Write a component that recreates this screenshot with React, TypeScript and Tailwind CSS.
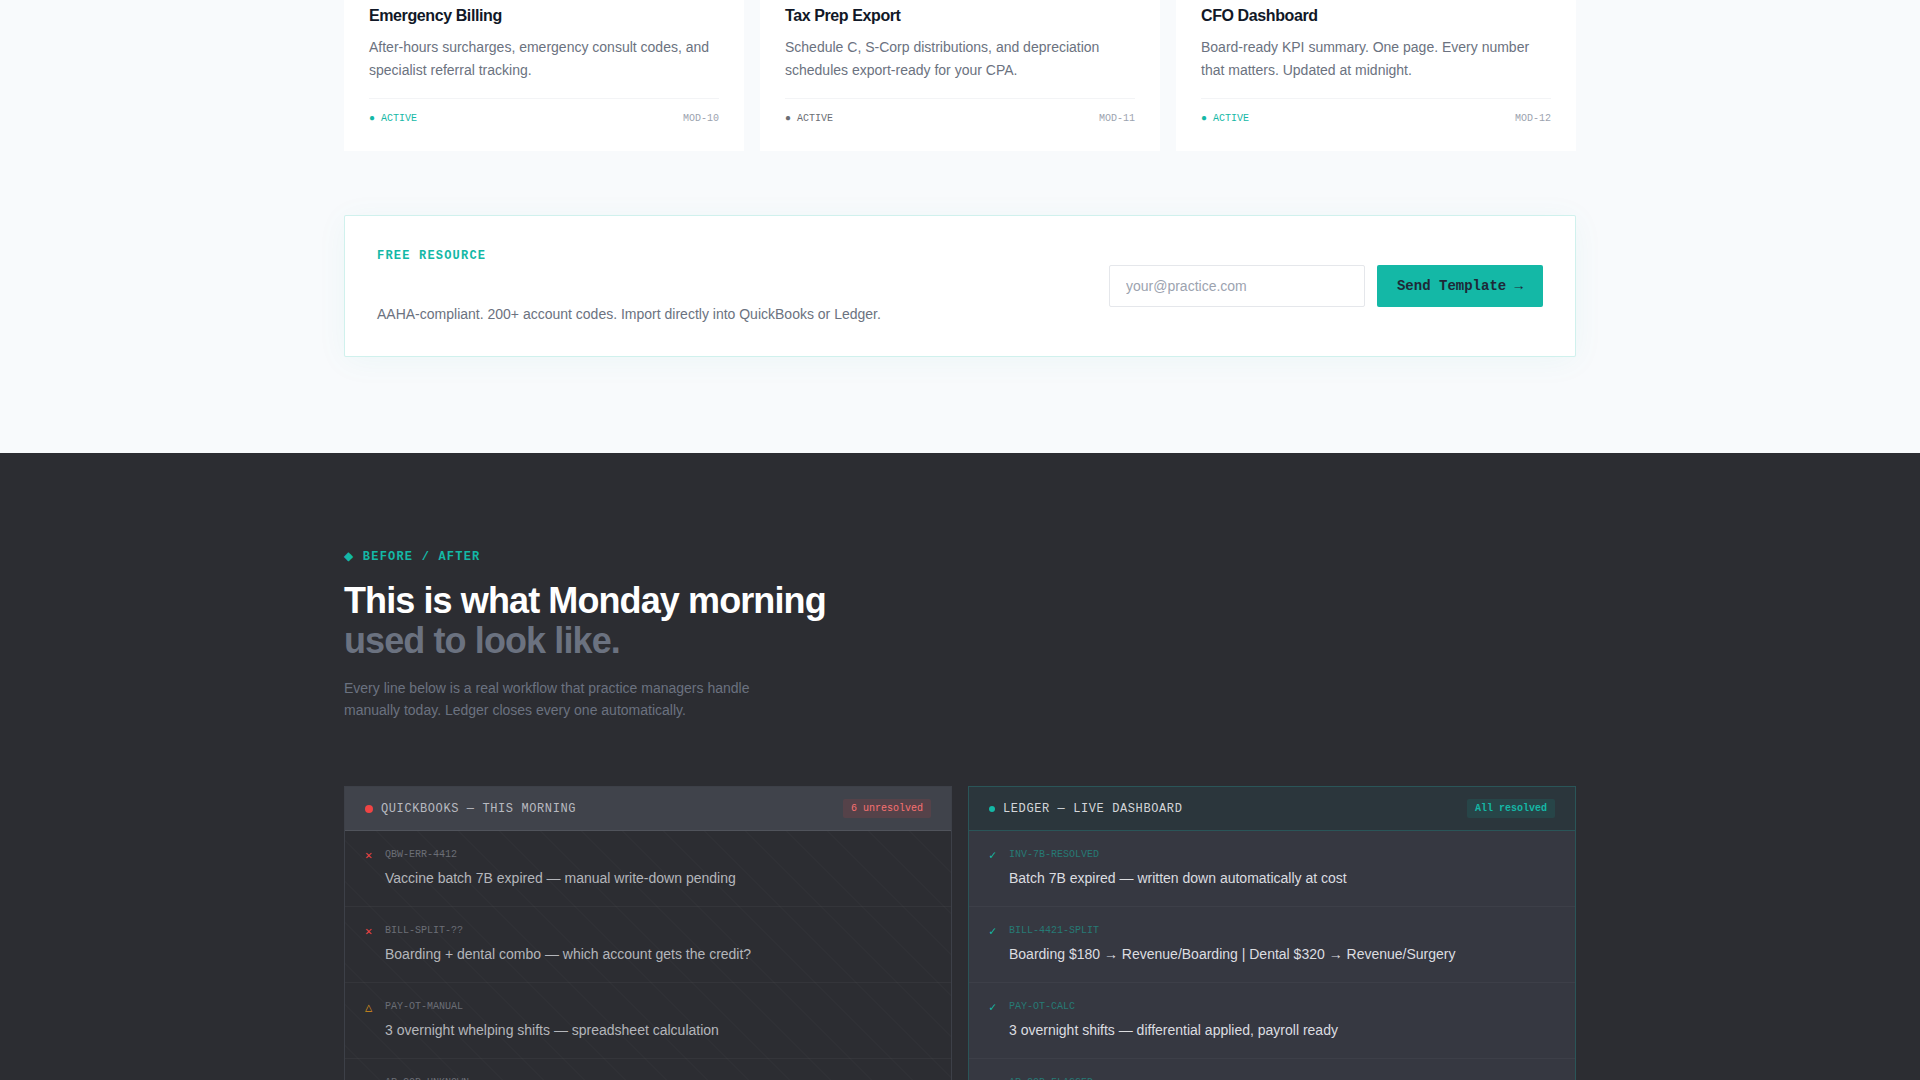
import { useState } from 'react';

const modules = [
  {
    code: 'MOD-10',
    title: 'Emergency Billing',
    text: 'After-hours surcharges, emergency consult codes, and specialist referral tracking.',
    statusColor: 'text-[#14b8a6]',
  },
  {
    code: 'MOD-11',
    title: 'Tax Prep Export',
    text: 'Schedule C, S-Corp distributions, and depreciation schedules export-ready for your CPA.',
    statusColor: 'text-[#6b6e74]',
  },
  {
    code: 'MOD-12',
    title: 'CFO Dashboard',
    text: 'Board-ready KPI summary. One page. Every number that matters. Updated at midnight.',
    statusColor: 'text-[#14b8a6]',
  },
];

const before = [
  { icon: '✕', color: 'text-[#ef4444]', code: 'QBW-ERR-4412', text: 'Vaccine batch 7B expired — manual write-down pending' },
  { icon: '✕', color: 'text-[#ef4444]', code: 'BILL-SPLIT-??', text: 'Boarding + dental combo — which account gets the credit?' },
  { icon: '△', color: 'text-[#d9901a]', code: 'PAY-OT-MANUAL', text: '3 overnight whelping shifts — spreadsheet calculation' },
  { icon: '✕', color: 'text-[#ef4444]', code: 'AR-COB-UNKNOWN', text: 'Insurance claim unmatched — call the carrier' },
];

const after = [
  { code: 'INV-7B-RESOLVED', text: 'Batch 7B expired — written down automatically at cost' },
  { code: 'BILL-4421-SPLIT', text: 'Boarding $180 → Revenue/Boarding | Dental $320 → Revenue/Surgery' },
  { code: 'PAY-OT-CALC', text: '3 overnight shifts — differential applied, payroll ready' },
  { code: 'AR-COB-FLAGGED', text: 'Insurance claim matched — carrier flagged' },
];

function Modules() {
  return (
    <div className="grid grid-cols-3 gap-4">
      {modules.map((m) => (
        <article key={m.code} className="bg-white px-[25px] pt-1 pb-6">
          <h3 className="text-base leading-6 font-bold tracking-tight text-[#111827]">{m.title}</h3>
          <p className="mt-2 text-sm leading-[23px] text-[#6b7280]">{m.text}</p>
          <div className="mt-4 flex items-center justify-between border-t border-[#f3f4f6] pt-3 font-['Liberation_Mono',monospace] text-[10px] leading-4">
            <span className={m.statusColor}>● ACTIVE</span>
            <span className="text-[#9ca3af]">{m.code}</span>
          </div>
        </article>
      ))}
    </div>
  );
}

function TemplateForm() {
  const [email, setEmail] = useState('');

  return (
    <div className="mt-16 flex items-center justify-between gap-8 rounded-xs border border-[#14b8a6]/20 bg-white p-8 shadow-[0_4px_32px_rgba(20,184,166,0.05)]">
      <div>
        <p className="font-['Liberation_Mono',monospace] text-xs leading-4 font-bold tracking-[1.2px] text-[#14b8a6]">FREE RESOURCE</p>
        <p className="mt-10 text-sm leading-5 text-[#6b7280]">
          AAHA-compliant. 200+ account codes. Import directly into QuickBooks or Ledger.
        </p>
      </div>
      <form className="flex gap-3" onSubmit={(e) => e.preventDefault()}>
        <input
          type="email"
          aria-label="Work email"
          placeholder="your@practice.com"
          value={email}
          onChange={(e) => setEmail(e.target.value)}
          className="w-64 rounded-xs border border-[#e5e7eb] bg-white px-4 text-sm text-[#111827] placeholder:text-[#9ca3af]"
        />
        <button
          type="submit"
          className="rounded-xs bg-[#14b8a6] px-5 py-[11px] font-['Liberation_Mono',monospace] text-sm leading-5 font-bold text-[#1f2937]"
        >
          Send Template →
        </button>
      </form>
    </div>
  );
}

function BeforePanel() {
  return (
    <div className="border border-[#3d4048] bg-[repeating-linear-gradient(45deg,transparent_0px,transparent_28px,rgba(255,255,255,0.017)_28px,rgba(255,255,255,0.017)_29px)]">
      <div className="flex items-start justify-between border-b border-[#50535b] bg-[#40434b] px-5 pt-3 pb-[11px]">
        <div className="flex items-center gap-2 font-['Liberation_Mono',monospace] text-xs leading-5 tracking-[0.6px] text-[#b8bac0]">
          <span className="size-2 rounded-full bg-[#ef4444]" />
          QUICKBOOKS — THIS MORNING
        </div>
        <span className="rounded-xs bg-[#ef4444]/12 px-2 font-['Liberation_Mono',monospace] text-[10px] leading-[19px] text-[#f87171]">
          6 unresolved
        </span>
      </div>
      <ul className="min-h-[460px]">
        {before.map((row) => (
          <li key={row.code} className="flex gap-3 border-b border-white/4 px-5 py-4">
            <span className={`mt-px w-2 font-['Liberation_Mono',monospace] text-xs leading-4 ${row.color}`}>{row.icon}</span>
            <div>
              <p className="font-['Liberation_Mono',monospace] text-[10px] leading-4 text-[#6b6e76]">{row.code}</p>
              <p className="mt-1 text-sm leading-[23px] text-[#b4b6bb]">{row.text}</p>
            </div>
          </li>
        ))}
      </ul>
    </div>
  );
}

function AfterPanel() {
  return (
    <div className="border border-[#2a5558] bg-[#363841]">
      <div className="flex items-start justify-between border-b border-[#2a5558] bg-[#2b363c] px-5 pt-3 pb-[11px]">
        <div className="flex items-center gap-2 font-['Liberation_Mono',monospace] text-xs leading-5 tracking-[0.6px] text-[#d4d6da]">
          <span className="size-1.5 rounded-full bg-[#14b8a6]" />
          LEDGER — LIVE DASHBOARD
        </div>
        <span className="rounded-xs bg-[#14b8a6]/12 px-2 font-['Liberation_Mono',monospace] text-[10px] leading-[19px] font-bold text-[#14b8a6]">
          All resolved
        </span>
      </div>
      <ul>
        {after.map((row) => (
          <li key={row.code} className="flex gap-3 border-b border-white/4 px-5 py-4">
            <span className="mt-px w-2 font-['Liberation_Mono',monospace] text-xs leading-4 text-[#14b8a6]">✓</span>
            <div>
              <p className="font-['Liberation_Mono',monospace] text-[10px] leading-4 text-[#267a75]">{row.code}</p>
              <p className="mt-1 text-sm leading-[23px] text-[#dcdde0]">{row.text}</p>
            </div>
          </li>
        ))}
      </ul>
    </div>
  );
}

export default function App() {
  return (
    <main className="h-screen overflow-hidden bg-[#2c2d32] font-['Liberation_Sans',Arial,sans-serif]">
      <section className="bg-[#f8fafc] pb-24">
        <div className="mx-auto max-w-7xl px-6">
          <Modules />
          <TemplateForm />
        </div>
      </section>

      <section className="bg-[#2c2d32] pt-24">
        <div className="mx-auto max-w-7xl px-6">
          <p className="font-['Liberation_Mono',monospace] text-xs leading-4 font-bold tracking-[1.2px] text-[#14b8a6]">
            <span className="font-['DejaVu_Sans',sans-serif] leading-none font-normal">◆</span> BEFORE / AFTER
          </p>
          <h2 className="mt-4 text-4xl leading-10 font-bold tracking-tight text-white">
            This is what Monday morning
            <br />
            <span className="text-[#6b7280]">used to look like.</span>
          </h2>
          <p className="mt-4 max-w-md text-sm leading-[22px] text-[#6b7280]">
            Every line below is a real workflow that practice managers handle manually today. Ledger closes every one automatically.
          </p>
          <div className="mt-[65px] grid grid-cols-2 gap-4">
            <BeforePanel />
            <AfterPanel />
          </div>
        </div>
      </section>
    </main>
  );
}
